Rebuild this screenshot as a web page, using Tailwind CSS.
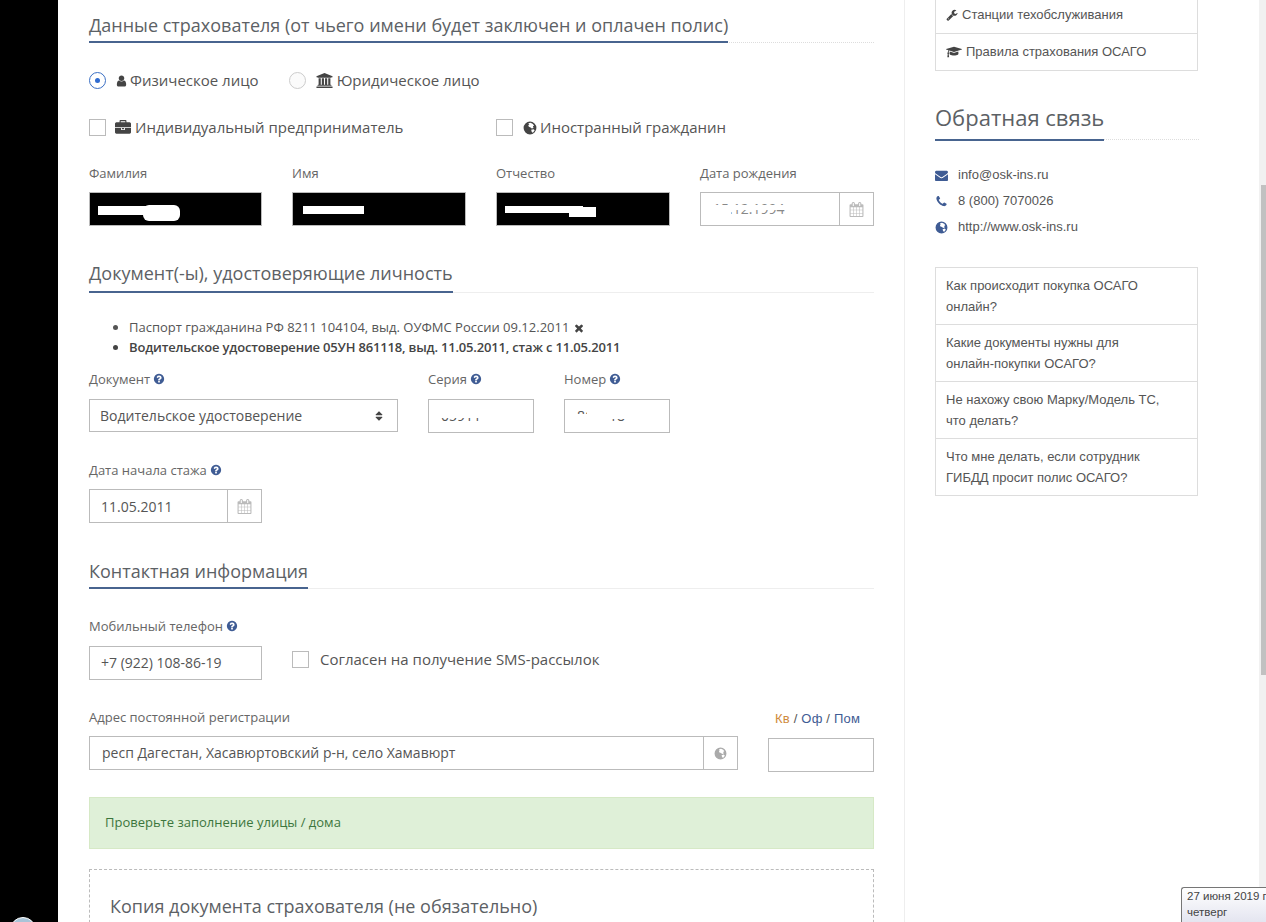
<!DOCTYPE html>
<html lang="ru">
<head>
    <meta charset="UTF-8">
    <title>Данные страхователя</title>
    <script src="https://cdn.jsdelivr.net/npm/@tailwindcss/browser@4"></script>
</head>
<body class="bg-white">
    <!-- shared icons -->
    <svg class="hidden">
        <symbol id="i-question" viewBox="0 0 1792 1792"><path d="M1024 1376v-192q0-14-9-23t-23-9h-192q-14 0-23 9t-9 23v192q0 14 9 23t23 9h192q14 0 23-9t9-23zm256-672q0-88-55.5-163t-138.5-116-170-41q-243 0-371 213-15 24 8 42l132 100q7 6 19 6 16 0 25-12 53-68 86-92 34-24 86-24 48 0 85.5 26t37.5 59q0 38-20 61t-68 45q-63 28-115.5 86.5t-52.5 125.5v36q0 14 9 23t23 9h192q14 0 23-9t9-23q0-19 21.5-49.5t54.5-49.5q32-18 49-28.5t46-35 44.5-48 28-60.5 12.5-81zm384 192q0 209-103 385.5t-279.5 279.5-385.5 103-385.5-103-279.5-279.5-103-385.5 103-385.5 279.5-279.5 385.5-103 385.5 103 279.5 279.5 103 385.5z"/></symbol>
        <symbol id="i-calendar" viewBox="0 0 1792 1792"><path d="M192 1664h288v-288h-288v288zm352 0h320v-288h-320v288zm-352-352h288v-320h-288v320zm352 0h320v-320h-320v320zm-352-384h288v-288h-288v288zm736 736h320v-288h-320v288zm-384-736h320v-288h-320v288zm768 736h288v-288h-288v288zm-384-352h320v-320h-320v320zm-352-864v-288q0-13-9.5-22.5t-22.5-9.5h-64q-13 0-22.5 9.5t-9.5 22.5v288q0 13 9.5 22.5t22.5 9.5h64q13 0 22.5-9.5t9.5-22.5zm736 864h288v-320h-288v320zm-384-384h320v-288h-320v288zm384 0h288v-288h-288v288zm32-480v-288q0-13-9.5-22.5t-22.5-9.5h-64q-13 0-22.5 9.5t-9.5 22.5v288q0 13 9.5 22.5t22.5 9.5h64q13 0 22.5-9.5t9.5-22.5zm384-64v1280q0 52-38 90t-90 38h-1408q-52 0-90-38t-38-90v-1280q0-52 38-90t90-38h128v-96q0-66 47-113t113-47h64q66 0 113 47t47 113v96h384v-96q0-66 47-113t113-47h64q66 0 113 47t47 113v96h128q52 0 90 38t38 90z"/></symbol>
        <symbol id="i-globe" viewBox="0 0 24 24"><path fill-rule="evenodd" d="M12 1a11 11 0 1 0 0 22 11 11 0 0 0 0-22zM9 4l4-1 4 2 2 3-2 1 1 3-3 1-2-2-3-1-1-3 2-1zM14 15l4-1 2 2-3 4-2-1z"/></symbol>
    </svg>

    <div class="flex w-[1266px] h-[922px] overflow-hidden font-['Open_Sans',sans-serif] text-[#555]">
        <!-- black strip on the left -->
        <div class="relative w-[58px] shrink-0 bg-black overflow-hidden">
            <div class="absolute left-[10px] top-[917px] w-[26px] h-[26px] rounded-full bg-[#a9c4d8] border border-white"></div>
        </div>

        <!-- form column -->
        <main class="w-[847px] shrink-0 border-r border-[#eeeeee] pl-[31px] pr-[30px]">
            <div class="w-[785px]">
                <div class="pt-[14px] border-b border-dotted border-[#dddddd] h-[43px]">
                    <h2 class="inline-block h-[29px] border-b-2 border-[#48648f] text-[18px] leading-[23px] text-[#5c6165]">Данные страхователя (от чьего имени будет заключен и оплачен полис)</h2>
                </div>

                <div class="flex items-center h-[17px] mt-[29px] text-[15px]">
                    <span class="flex items-center justify-center w-[17px] h-[17px] rounded-full border border-[#3b6fc4]"><span class="w-[5px] h-[5px] rounded-full bg-[#2f6bd0]"></span></span>
                    <svg class="ml-[9px] w-[13px] h-[14px] fill-[#444]" viewBox="0 0 1792 1792"><path d="M1536 1399q0 109-62.5 187t-150.5 78h-854q-88 0-150.5-78t-62.5-187q0-85 8.5-160.5t31.5-152 58.5-131 94-89 134.5-34.5q131 128 313 128t313-128q76 0 134.5 34.5t94 89 58.5 131 31.5 152 8.5 160.5zm-256-887q0 159-112.5 271.5t-271.5 112.5-271.5-112.5-112.5-271.5 112.5-271.5 271.5-112.5 271.5 112.5 112.5 271.5z"/></svg>
                    <span class="ml-[2px]">Физическое лицо</span>
                    <span class="ml-[30px] w-[17px] h-[17px] rounded-full border border-[#cccccc] bg-[#fbfbfb]"></span>
                    <svg class="ml-[10px] w-[17px] h-[15px] fill-[#444]" viewBox="0 0 1920 1792"><path d="M960 0l960 384v128h-128q0 26-20.5 45t-48.5 19h-1526q-28 0-48.5-19t-20.5-45h-128v-128zm-704 640h256v768h128v-768h256v768h128v-768h256v768h128v-768h256v768h59q28 0 48.5 19t20.5 45v64h-1664v-64q0-26 20.5-45t48.5-19h59v-768zm1595 960q28 0 48.5 19t20.5 45v128h-1920v-128q0-26 20.5-45t48.5-19h1782z"/></svg>
                    <span class="ml-[4px]">Юридическое лицо</span>
                </div>

                <div class="flex items-center h-[17px] mt-[30px] text-[15px]">
                    <span class="w-[17px] h-[17px] border border-[#bbbbbb]"></span>
                    <svg class="ml-[9px] w-[16px] h-[16px] fill-[#444]" viewBox="0 0 1792 1792"><path d="M640 256h512v-128h-512v128zm1152 640v480q0 66-47 113t-113 47h-1472q-66 0-113-47t-47-113v-480h672v160q0 26 19 45t45 19h320q26 0 45-19t19-45v-160h672zm-768 0v128h-256v-128h256zm768-480v384h-1792v-384q0-66 47-113t113-47h352v-160q0-40 28-68t68-28h576q40 0 68 28t28 68v160h352q66 0 113 47t47 113z"/></svg>
                    <span class="ml-[4px] w-[361px]">Индивидуальный предприниматель</span>
                    <span class="w-[17px] h-[17px] border border-[#bbbbbb]"></span>
                    <svg class="ml-[10px] w-[14px] h-[14px] fill-[#444]"><use href="#i-globe"/></svg>
                    <span class="ml-[3px]">Иностранный гражданин</span>
                </div>

                <div class="flex gap-[30px] mt-[28px] text-[13px] leading-[18px] text-[#666]">
                    <div class="w-[173px]">
                        <div>Фамилия</div>
                        <div class="relative h-[34px] mt-[10px] bg-black border border-[#bbbbbb]">
                            <span class="absolute left-[8px] top-[13px] w-[60px] h-[9px] bg-white"></span>
                            <span class="absolute left-[53px] top-[12px] w-[37px] h-[16px] rounded-[6px] bg-white"></span>
                        </div>
                    </div>
                    <div class="w-[174px]">
                        <div>Имя</div>
                        <div class="relative h-[34px] mt-[10px] bg-black border border-[#bbbbbb]">
                            <span class="absolute left-[10px] top-[13px] w-[61px] h-[8px] bg-white"></span>
                        </div>
                    </div>
                    <div class="w-[174px]">
                        <div>Отчество</div>
                        <div class="relative h-[34px] mt-[10px] bg-black border border-[#bbbbbb]">
                            <span class="absolute left-[8px] top-[13px] w-[78px] h-[7px] bg-white"></span>
                            <span class="absolute left-[72px] top-[14px] w-[27px] h-[10px] bg-white"></span>
                        </div>
                    </div>
                    <div class="w-[174px]">
                        <div>Дата рождения</div>
                        <div class="flex h-[34px] mt-[10px] border border-[#bbbbbb] text-[14px] text-[#888]">
                            <div class="relative flex-1 leading-[32px] pl-[12px] overflow-hidden">
                                15.12.1994
                                <span class="absolute left-0 top-[12px] w-full h-[5px] bg-white"></span>
                                <span class="absolute left-0 top-[17px] w-[30px] h-[8px] bg-white"></span>
                                <span class="absolute left-0 top-0 w-full h-[9px] bg-white"></span>
                            </div>
                            <div class="flex items-center justify-center w-[34px] border-l border-[#bbbbbb]">
                                <svg class="w-[15px] h-[15px] fill-[#bbbbbb]"><use href="#i-calendar"/></svg>
                            </div>
                        </div>
                    </div>
                </div>

                <div class="mt-[35px] border-b border-[#eeeeee] h-[32px]">
                    <h2 class="inline-block h-[32px] border-b-2 border-[#48648f] text-[18px] leading-[25px] text-[#5c6165]">Документ(-ы), удостоверяющие личность</h2>
                </div>

                <ul class="mt-[24px] pl-[40px] list-disc text-[13px] leading-[20px] text-[#555]">
                    <li>Паспорт гражданина РФ 8211 104104, выд. ОУФМС России 09.12.2011 <svg class="inline w-[12px] h-[12px] fill-[#444] align-[-2px]" viewBox="0 0 1792 1792"><path d="M1490 1322q0 40-28 68l-136 136q-28 28-68 28t-68-28l-294-294-294 294q-28 28-68 28t-68-28l-136-136q-28-28-28-68t28-68l294-294-294-294q-28-28-28-68t28-68l136-136q28-28 68-28t68 28l294 294 294-294q28-28 68-28t68 28l136 136q28 28 28 68t-28 68l-294 294 294 294q28 28 28 68z"/></svg></li>
                    <li class="font-semibold text-[#444] tracking-[-0.18px]">Водительское удостоверение 05УН 861118, выд. 11.05.2011, стаж с 11.05.2011</li>
                </ul>

                <div class="flex mt-[13px] text-[13px] leading-[18px] text-[#666]">
                    <div class="w-[339px]">
                        <div class="flex items-center gap-[3px]">Документ <svg class="w-[12px] h-[12px] fill-[#3f5c94]"><use href="#i-question"/></svg></div>
                        <div class="flex items-center justify-between h-[33px] w-[309px] mt-[11px] border border-[#bbbbbb] pl-[10px] pr-[12px] text-[14px] text-[#555]">
                            Водительское удостоверение
                            <svg class="w-[12px] h-[12px] fill-[#444]" viewBox="0 0 1792 1792"><path d="M1408 1088q0 26-19 45l-448 448q-19 19-45 19t-45-19l-448-448q-19-19-19-45t19-45 45-19h896q26 0 45 19t19 45zm0-384q0 26-19 45t-45 19h-896q-26 0-45-19t-19-45 19-45l448-448q19-19 45-19t45 19l448 448q19 19 19 45z"/></svg>
                        </div>
                    </div>
                    <div class="w-[136px]">
                        <div class="flex items-center gap-[3px]">Серия <svg class="w-[12px] h-[12px] fill-[#3f5c94]"><use href="#i-question"/></svg></div>
                        <div class="relative h-[34px] w-[106px] mt-[11px] border border-[#bbbbbb] pl-[12px] leading-[32px] text-[14px] text-[#555] overflow-hidden">
                            05911
                            <span class="absolute left-0 top-0 w-full h-[18px] bg-white"></span>
                        </div>
                    </div>
                    <div class="w-[106px]">
                        <div class="flex items-center gap-[3px]">Номер <svg class="w-[12px] h-[12px] fill-[#3f5c94]"><use href="#i-question"/></svg></div>
                        <div class="relative h-[34px] w-[106px] mt-[11px] border border-[#bbbbbb] pl-[12px] leading-[32px] text-[14px] text-[#555] overflow-hidden">
                            861118
                            <span class="absolute left-0 top-[14px] w-[36px] h-[18px] bg-white"></span>
                            <span class="absolute left-[22px] top-0 w-[60px] h-[19px] bg-white"></span>
                            <span class="absolute left-[22px] top-0 w-[22px] h-[32px] bg-white"></span>
                        </div>
                    </div>
                </div>

                <div class="mt-[28px] flex items-center gap-[3px] text-[13px] leading-[18px] text-[#666]">Дата начала стажа <svg class="w-[12px] h-[12px] fill-[#3f5c94]"><use href="#i-question"/></svg></div>
                <div class="flex w-[173px] h-[34px] mt-[10px] border border-[#bbbbbb] text-[14px]">
                    <div class="flex-1 leading-[33px] pl-[11px]">11.05.2011</div>
                    <div class="flex items-center justify-center w-[34px] border-l border-[#bbbbbb]">
                        <svg class="w-[15px] h-[15px] fill-[#bbbbbb]"><use href="#i-calendar"/></svg>
                    </div>
                </div>

                <div class="mt-[35px] border-b border-[#eeeeee] h-[31px]">
                    <h2 class="inline-block h-[31px] border-b-2 border-[#48648f] text-[18px] leading-[26px] text-[#5c6165]">Контактная информация</h2>
                </div>

                <div class="mt-[28px] flex items-center gap-[3px] text-[13px] leading-[18px] text-[#666]">Мобильный телефон <svg class="w-[12px] h-[12px] fill-[#3f5c94]"><use href="#i-question"/></svg></div>
                <div class="flex mt-[11px]">
                    <div class="w-[173px] h-[34px] border border-[#bbbbbb] pl-[11px] leading-[32px] text-[14px]">+7 (922) 108-86-19</div>
                    <div class="flex items-center h-[17px] ml-[30px] mt-[5px] text-[15px]">
                        <span class="w-[17px] h-[17px] border border-[#bbbbbb]"></span>
                        <span class="ml-[11px]">Согласен на получение SMS-рассылок</span>
                    </div>
                </div>

                <div class="flex mt-[28px]">
                    <div class="w-[649px]">
                        <div class="text-[13px] leading-[18px] text-[#666]">Адрес постоянной регистрации</div>
                        <div class="flex h-[34px] mt-[10px] border border-[#bbbbbb] text-[14px]">
                            <div class="flex-1 leading-[32px] pl-[12px]">респ Дагестан, Хасавюртовский р-н, село Хамавюрт</div>
                            <div class="flex items-center justify-center w-[34px] border-l border-[#bbbbbb]">
                                <svg class="w-[13px] h-[13px] fill-[#aaaaaa]"><use href="#i-globe"/></svg>
                            </div>
                        </div>
                    </div>
                    <div class="ml-[30px] w-[106px]">
                        <div class="pt-[2px] pl-[7px] text-[13px] leading-[18px] tracking-[0.2px] font-['Liberation_Sans',sans-serif] text-[#555]"><span class="text-[#d08b3c]">Кв</span> / <span class="text-[#3f5c94]">Оф</span> / <span class="text-[#3f5c94]">Пом</span></div>
                        <div class="h-[34px] mt-[10px] border border-[#bbbbbb]"></div>
                    </div>
                </div>

                <div class="flex items-center h-[52px] mt-[25px] pl-[15px] bg-[#dff0d8] border border-[#d6e9c6] text-[13px] text-[#3c763d]">Проверьте заполнение улицы / дома</div>

                <div class="h-[120px] mt-[20px] border border-dashed border-[#bbbbbb] pt-[24px] pl-[20px] text-[18px] leading-[25px] text-[#5c6165]">Копия документа страхователя (не обязательно)</div>
            </div>
        </main>

        <!-- sidebar -->
        <aside class="w-[354px] shrink-0 pl-[30px] font-['Liberation_Sans',sans-serif] text-[13px] text-[#555]">
            <ul class="w-[263px] -mt-[4px] border border-[#dddddd]">
                <li class="flex items-center gap-[4px] h-[37px] pl-[10px] border-b border-[#dddddd]">
                    <svg class="w-[12px] h-[12px] fill-[#444]" viewBox="0 0 1792 1792"><path d="M448 1472q0-26-19-45t-45-19-45 19-19 45 19 45 45 19 45-19 19-45zm644-420l-682 682q-37 37-90 37-52 0-91-37l-106-108q-38-36-38-90 0-53 38-91l681-681q39 98 114.5 173.5t173.5 114.5zm634-435q0 39-23 106-47 134-164.5 217.5t-258.5 83.5q-185 0-316.5-131.5t-131.5-316.5 131.5-316.5 316.5-131.5q58 0 121.5 16.5t107.5 46.5q16 11 16 28t-16 28l-293 169v224l193 107q5-3 79-48.5t135.5-81 70.5-35.5q15 0 23.5 10t8.5 25z"/></svg>
                    Станции техобслуживания
                </li>
                <li class="flex items-center gap-[4px] h-[36px] pl-[10px]">
                    <svg class="w-[16px] h-[14px] fill-[#444]" viewBox="0 0 2304 1792"><path d="M1774 836l18 316q4 69-82 128t-235 93.5-323 34.5-323-34.5-235-93.5-82-128l18-316 574 181q22 7 48 7t48-7zm530-324q0 23-22 31l-1120 352q-4 1-10 1t-10-1l-652-206q-43 34-71 111.5t-34 178.5q63 36 63 109 0 69-58 107l58 433q2 14-8 25-9 11-24 11h-192q-15 0-24-11-10-11-8-25l58-433q-58-38-58-107 0-73 65-111 11-207 98-330l-333-104q-22-8-22-31t22-31l1120-352q4-1 10-1t10 1l1120 352q22 8 22 31z"/></svg>
                    Правила страхования ОСАГО
                </li>
            </ul>

            <div class="w-[264px] mt-[32px] h-[37px] border-b border-dotted border-[#dddddd]">
                <h3 class="inline-block h-[38px] border-b-2 border-[#48648f] font-['Open_Sans',sans-serif] text-[22px] leading-[28px] text-[#5c6165]">Обратная связь</h3>
            </div>

            <ul class="mt-[22px]">
                <li class="flex items-center h-[26px] gap-[10px]">
                    <svg class="w-[13px] h-[13px] fill-[#3f5c94]" viewBox="0 0 1792 1792"><path d="M1792 710v794q0 66-47 113t-113 47h-1472q-66 0-113-47t-47-113v-794q44 49 101 87 362 246 497 345 57 42 92.5 65.5t94.5 48 110 24.5h2q51 0 110-24.5t94.5-48 92.5-65.5q170-123 498-345 57-39 100-87zm0-294q0 79-49 151t-122 123q-376 261-468 325-10 7-42.5 30.5t-54 38-52 32.5-57.5 27-50 9h-2q-23 0-50-9t-57.5-27-52-32.5-54-38-42.5-30.5q-91-64-262-182.5t-205-142.5q-62-42-117-115.5t-55-136.5q0-78 41.5-130t118.5-52h1472q65 0 112.5 47t47.5 113z"/></svg>
                    info@osk-ins.ru
                </li>
                <li class="flex items-center h-[26px] gap-[10px]">
                    <svg class="w-[13px] h-[13px] fill-[#3f5c94]" viewBox="0 0 1792 1792"><path d="M1600 1240q0 27-10 70.5t-21 68.5q-21 50-122 106-94 51-186 51-27 0-53-3.5t-57.5-12.5-47-14.5-55.5-20.5-49-18q-98-35-175-83-127-79-264-216t-216-264q-48-77-83-175-3-9-18-49t-20.5-55.5-14.5-47-12.5-57.5-3.5-53q0-92 51-186 56-101 106-122 25-11 68.5-21t70.5-10q14 0 21 3 18 6 53 76 11 19 30 54t35 63.5 31 53.5q3 4 17.5 25t21.5 35.5 7 28.5q0 20-28.5 50t-62 55-62 53-28.5 46q0 9 5 22.5t8.5 20.5 14 24 11.5 19q76 137 174 235t235 174q2 1 19 11.5t24 14 20.5 8.5 22.5 5q18 0 46-28.5t53-62 55-62 50-28.5q14 0 28.5 7t35.5 21.5 25 17.5q25 15 53.5 31t63.5 35 54 30q70 35 76 53 3 7 3 21z"/></svg>
                    8 (800) 7070026
                </li>
                <li class="flex items-center h-[26px] gap-[10px]">
                    <svg class="w-[13px] h-[13px] fill-[#3f5c94]"><use href="#i-globe"/></svg>
                    http://www.osk-ins.ru
                </li>
            </ul>

            <ul class="w-[263px] mt-[27px] border border-[#dddddd] leading-[21px]">
                <li class="h-[57px] pl-[10px] pr-[32px] pt-[7px] border-b border-[#dddddd]">Как происходит покупка ОСАГО онлайн?</li>
                <li class="h-[57px] pl-[10px] pr-[32px] pt-[7px] border-b border-[#dddddd]">Какие документы нужны для онлайн-покупки ОСАГО?</li>
                <li class="h-[57px] pl-[10px] pr-[32px] pt-[7px] border-b border-[#dddddd]">Не нахожу свою Марку/Модель ТС, что делать?</li>
                <li class="h-[56px] pl-[10px] pr-[32px] pt-[7px]">Что мне делать, если сотрудник ГИБДД просит полис ОСАГО?</li>
            </ul>
        </aside>

        <!-- browser scrollbar -->
        <div class="flex-1 bg-[#f1f1f1] pt-[185px] pl-[2px]">
            <div class="h-[490px] bg-[#c1c1c1]"></div>
        </div>
    </div>

    <!-- date tooltip of the taskbar clock -->
    <div class="absolute left-[1181px] top-[887px] w-[85px] h-[35px] rounded-tl-[3px] border-l border-t border-[#767676] bg-gradient-to-b from-white to-[#e4e5f0] pl-[5px] font-['Liberation_Sans',sans-serif] text-[11.5px] leading-[16px] text-[#444] whitespace-nowrap">27 июня 2019 г<br>четверг</div>
</body>
</html>
